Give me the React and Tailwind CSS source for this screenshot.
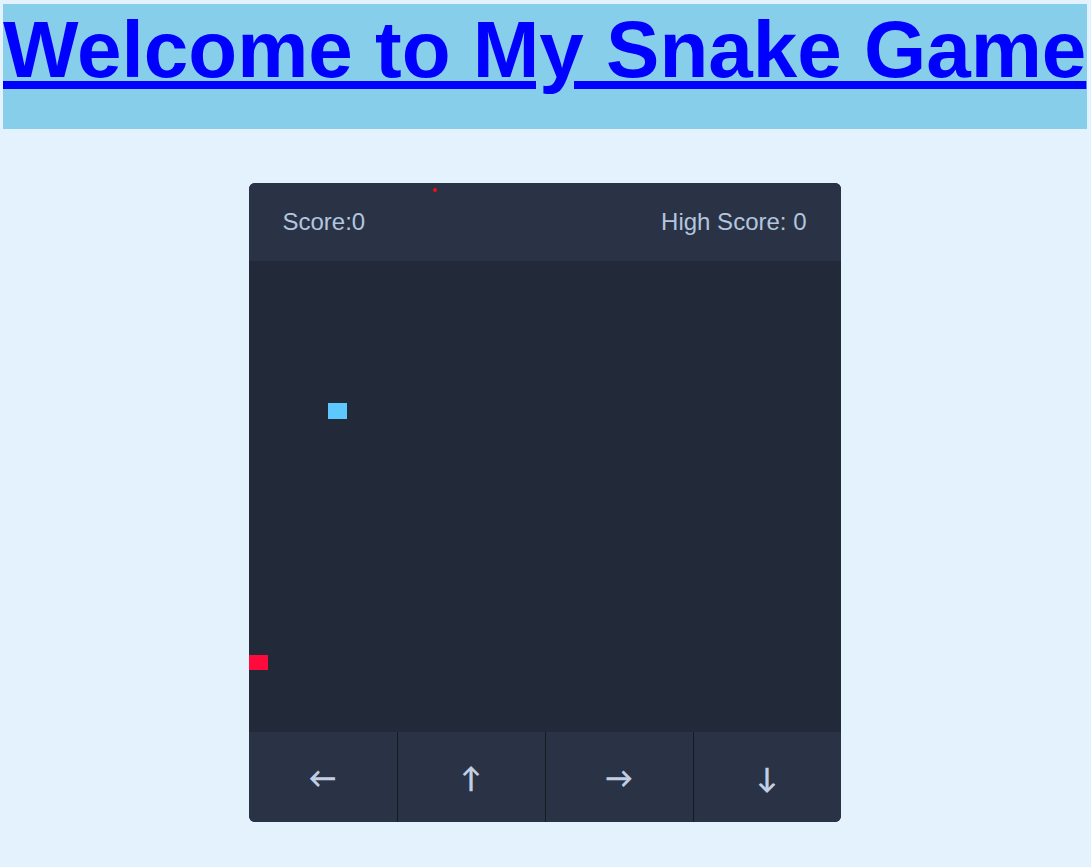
export default function App() {
  return (
    <div className="min-h-[867px] bg-[#e3f2fd] pt-[4px] pl-[3px] pr-[4px] overflow-hidden" style={{ fontFamily: '"Liberation Sans", Arial, sans-serif' }}>
      <div className="h-[125px] bg-[#87ceeb] overflow-hidden">
        <h1 className="m-0 text-[80px] font-bold leading-[92px] whitespace-nowrap">
          <a href="#" className="text-[#0000ff] underline decoration-[8px] underline-offset-[4px]">Welcome to My Snake Game</a>
        </h1>
      </div>
      <div className="flex justify-center pt-[54px] pr-[1px]">
        <div className="relative w-[592px] rounded-md overflow-hidden bg-[#222938]">
          <div className="flex h-[78px] items-center justify-between bg-[#293345] px-[34px] text-[24px] text-[#b3c5df]">
            <span>Score:0</span>
            <span>High Score: 0</span>
          </div>
          <div className="relative h-[471px] bg-[#222938]">
            <div className="absolute left-[79px] top-[142px] h-[16px] w-[19px] bg-[#5cc8fd]" />
            <div className="absolute left-0 top-[394px] h-[15px] w-[19px] bg-[#ff0a3d]" />
          </div>
          <div className="grid h-[90px] grid-cols-4 bg-[#293345] text-[28px] font-bold leading-none text-[#c1cee3]" style={{ fontFamily: 'Lato, sans-serif' }}>
            <div className="flex items-center justify-center">←</div>
            <div className="flex items-center justify-center border-l border-[#151a24]">↑</div>
            <div className="flex items-center justify-center border-l border-[#151a24]">→</div>
            <div className="flex items-center justify-center border-l border-[#151a24]">↓</div>
          </div>
          <div className="absolute left-[184px] top-[5px] h-[4px] w-[4px] rounded-full bg-[#ee1111]" />
        </div>
      </div>
    </div>
  );
}
